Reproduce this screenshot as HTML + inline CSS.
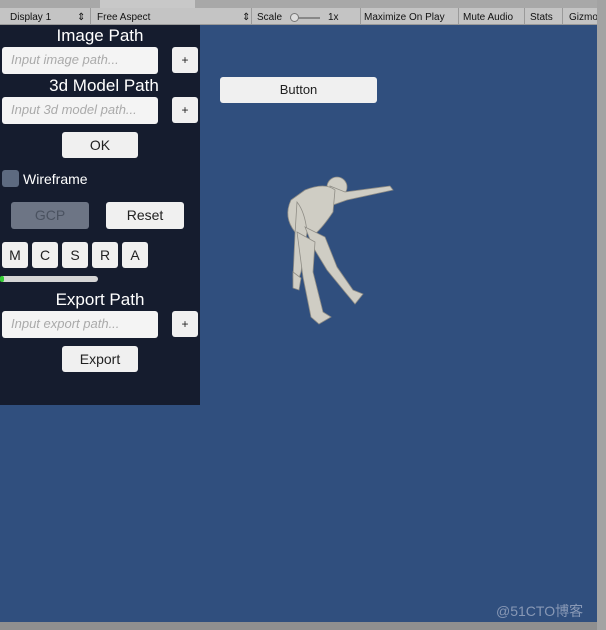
<!DOCTYPE html>
<html><head><meta charset="utf-8"><style>
*{margin:0;padding:0;box-sizing:border-box}
body{width:606px;height:630px;position:relative;overflow:hidden;background:#8f8f8f;font-family:"Liberation Sans",sans-serif}
.abs{position:absolute}
.tabs{left:0;top:0;width:606px;height:8px;background:#a8a8a8}
.tool{left:0;top:8px;width:606px;height:17px;background:#c4c4c4;border-bottom:1px solid #999;font-size:10px;color:#111}
.tool span{position:absolute;top:4px}
.sep{position:absolute;top:0;width:1px;height:17px;background:#9a9a9a}
.view{left:0;top:25px;width:597px;height:597px;background:#304f7e}
.rs{left:597px;top:0;width:9px;height:630px;background:#a3a3a3}
.panel{left:0;top:25px;width:200px;height:380px;background:#151c2e}
.lbl{color:#fff;font-size:17px;text-align:center;width:200px;left:0}
.inp{background:#f4f4f4;border-radius:3px;color:#aaa;font-style:italic;font-size:13px;padding:5px 9px;height:27px}
.btn{background:#f0f0f0;border-radius:3px;color:#222;font-size:14px;text-align:center}
</style></head><body>
<div class="abs tabs"><div style="position:absolute;left:100px;top:0;width:95px;height:8px;background:#c8c8c8"></div></div>
<div class="abs tool">
<span style="left:10px">Display 1</span><span style="left:77px">⇕</span><div class="sep" style="left:90px"></div>
<span style="left:97px">Free Aspect</span><span style="left:242px">⇕</span><div class="sep" style="left:251px"></div>
<span style="left:257px">Scale</span><div style="position:absolute;left:290px;top:9px;width:30px;height:2px;background:#888"></div><div style="position:absolute;left:290px;top:5px;width:9px;height:9px;border-radius:50%;background:#ddd;border:1px solid #777"></div><span style="left:328px">1x</span>
<div class="sep" style="left:360px"></div><span style="left:364px">Maximize On Play</span><div class="sep" style="left:458px"></div>
<span style="left:463px">Mute Audio</span><div class="sep" style="left:524px"></div><span style="left:530px">Stats</span><div class="sep" style="left:562px"></div><span style="left:569px">Gizmo</span>
</div>
<div class="abs view"></div>
<div class="abs rs"></div>
<div class="abs panel"></div>
<div class="abs lbl" style="top:26px">Image Path</div>
<div class="abs inp" style="left:2px;top:47px;width:156px">Input image path...</div>
<div class="abs btn" style="left:172px;top:47px;width:26px;height:26px;line-height:26px;font-size:12px">+</div>
<div class="abs lbl" style="top:76px;padding-left:8px">3d Model Path</div>
<div class="abs inp" style="left:2px;top:97px;width:156px">Input 3d model path...</div>
<div class="abs btn" style="left:172px;top:97px;width:26px;height:26px;line-height:26px;font-size:12px">+</div>
<div class="abs btn" style="left:62px;top:132px;width:76px;height:26px;line-height:26px">OK</div>
<div class="abs" style="left:2px;top:170px;width:17px;height:17px;background:#5d6a80;border-radius:3px"></div>
<div class="abs" style="left:23px;top:171px;color:#fff;font-size:14px">Wireframe</div>
<div class="abs btn" style="left:11px;top:202px;width:78px;height:27px;line-height:27px;background:#6d7585;color:#4a5260">GCP</div>
<div class="abs btn" style="left:106px;top:202px;width:78px;height:27px;line-height:27px">Reset</div>
<div class="abs btn" style="left:2px;top:242px;width:26px;height:26px;line-height:26px">M</div>
<div class="abs btn" style="left:32px;top:242px;width:26px;height:26px;line-height:26px">C</div>
<div class="abs btn" style="left:62px;top:242px;width:26px;height:26px;line-height:26px">S</div>
<div class="abs btn" style="left:92px;top:242px;width:26px;height:26px;line-height:26px">R</div>
<div class="abs btn" style="left:122px;top:242px;width:26px;height:26px;line-height:26px">A</div>
<div class="abs" style="left:0;top:276px;width:98px;height:6px;background:#d5d5d5;border-radius:3px"></div>
<div class="abs" style="left:0;top:276px;width:4px;height:6px;background:#3c3;border-radius:3px"></div>
<div class="abs lbl" style="top:290px">Export Path</div>
<div class="abs inp" style="left:2px;top:311px;width:156px">Input export path...</div>
<div class="abs btn" style="left:172px;top:311px;width:26px;height:26px;line-height:26px;font-size:12px">+</div>
<div class="abs btn" style="left:62px;top:346px;width:76px;height:26px;line-height:26px">Export</div>
<div class="abs btn" style="left:220px;top:77px;width:157px;height:26px;line-height:26px;font-size:13px">Button</div>
<svg class="abs" style="left:275px;top:172px" width="125" height="155" viewBox="0 0 125 155">
<g fill="#cfcdc4" stroke="#8f8d86" stroke-width="0.8">
<ellipse cx="62" cy="15" rx="10" ry="10"/>
<path d="M55 14 L70 20 L115 14 L118 18 L72 28 L55 34 Z"/>
<path d="M30 18 Q50 10 60 18 L58 40 Q48 55 40 62 L20 60 Q8 45 16 28 Z"/>
<path d="M22 30 Q30 40 32 60 L26 100 L22 112 L18 106 L20 62 Z"/>
<path d="M30 55 L50 65 L62 95 L78 118 L88 122 L80 132 L70 120 L52 98 L38 75 Z"/>
<path d="M22 60 L40 70 L38 100 L48 140 L56 145 L44 152 L36 145 L28 105 Z"/>
<path d="M18 100 L26 106 L24 118 L18 116 Z"/>
</g></svg>
<div class="abs" style="left:496px;top:601px;color:#8898b5;font-size:14px;font-family:'Liberation Sans','Noto Sans CJK SC',sans-serif">@51CTO博客</div>
</body></html>
